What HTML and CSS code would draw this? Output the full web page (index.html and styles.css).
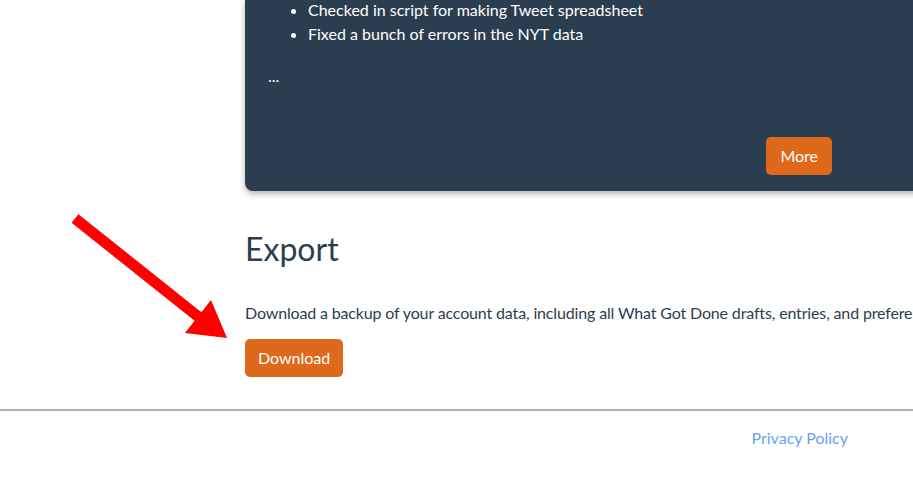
FILE: index.html
```html
<!DOCTYPE html>
<html>
<head>
<meta charset="utf-8">
<link rel="stylesheet" href="styles.css">
</head>
<body>
<main class="main">
  <div class="column">
    <section class="card">
      <ul class="items">
        <li>Checked in script for making Tweet spreadsheet</li>
        <li>Fixed a bunch of errors in the NYT data</li>
      </ul>
      <p class="ellipsis">...</p>
      <div class="card-actions">
        <button class="btn">More</button>
      </div>
    </section>
    <section class="export">
      <h2 class="title">Export</h2>
      <p class="desc">Download a backup of your account data, including all What Got Done drafts, entries, and preferences.</p>
      <button class="btn">Download</button>
    </section>
  </div>
</main>
<footer class="footer">
  <a class="footer-link" href="#">Privacy Policy</a>
</footer>
<svg class="arrow" width="913" height="478" viewBox="0 0 913 478">
  <polygon fill="#ff0000" points="78.4,214.2 201.4,312.2 211,300 227,338 185,333 194.6,320.8 71.6,222.8"/>
</svg>
</body>
</html>
```

FILE: styles.css
```css
html, body {
  margin: 0;
  padding: 0;
}
body {
  width: 913px;
  height: 478px;
  overflow: hidden;
  background: #ffffff;
  font-family: Lato, "Open Sans", sans-serif;
  font-size: 16px;
  color: #2b3e50;
  position: relative;
}
.main {
  padding-left: 245px;
}
.column {
  width: 720px;
}
.card {
  background: #2b3e50;
  color: #ffffff;
  border-radius: 0 0 8px 8px;
  box-shadow: 0 3px 6px rgba(0, 0, 0, 0.3);
  padding: 0 24px 16px 23px;
}
.items {
  margin: -2px 0 0;
  padding: 0 0 0 40px;
  line-height: 24px;
}
.ellipsis {
  margin: 18px 0 0;
  line-height: 24px;
}
.card-actions {
  display: flex;
  justify-content: flex-end;
  padding-right: 109px;
  margin-top: 49px;
}
.btn {
  font-family: Lato, "Open Sans", sans-serif;
  font-size: 16px;
  color: #ffffff;
  background: #df691a;
  border: none;
  border-radius: 5px;
  height: 38px;
  padding: 0 14px;
  line-height: 38px;
}
.export {
  padding-top: 38px;
}
.title {
  margin: 0;
  font-size: 32px;
  font-weight: 400;
  line-height: 40px;
  color: #2b3e50;
}
.desc {
  margin: 32px 0 14px;
  line-height: 24px;
  white-space: nowrap;
  letter-spacing: -0.15px;
}
.export .btn {
  padding: 0 13px;
}
.footer {
  margin-top: 32px;
  border-top: 2px solid #aab2b6;
  display: flex;
  justify-content: flex-end;
  padding: 15px 65px 0 0;
}
.footer-link {
  color: #6c9ff2;
  text-decoration: none;
  line-height: 24px;
}
.arrow {
  position: absolute;
  left: 0;
  top: 0;
  pointer-events: none;
}
```
